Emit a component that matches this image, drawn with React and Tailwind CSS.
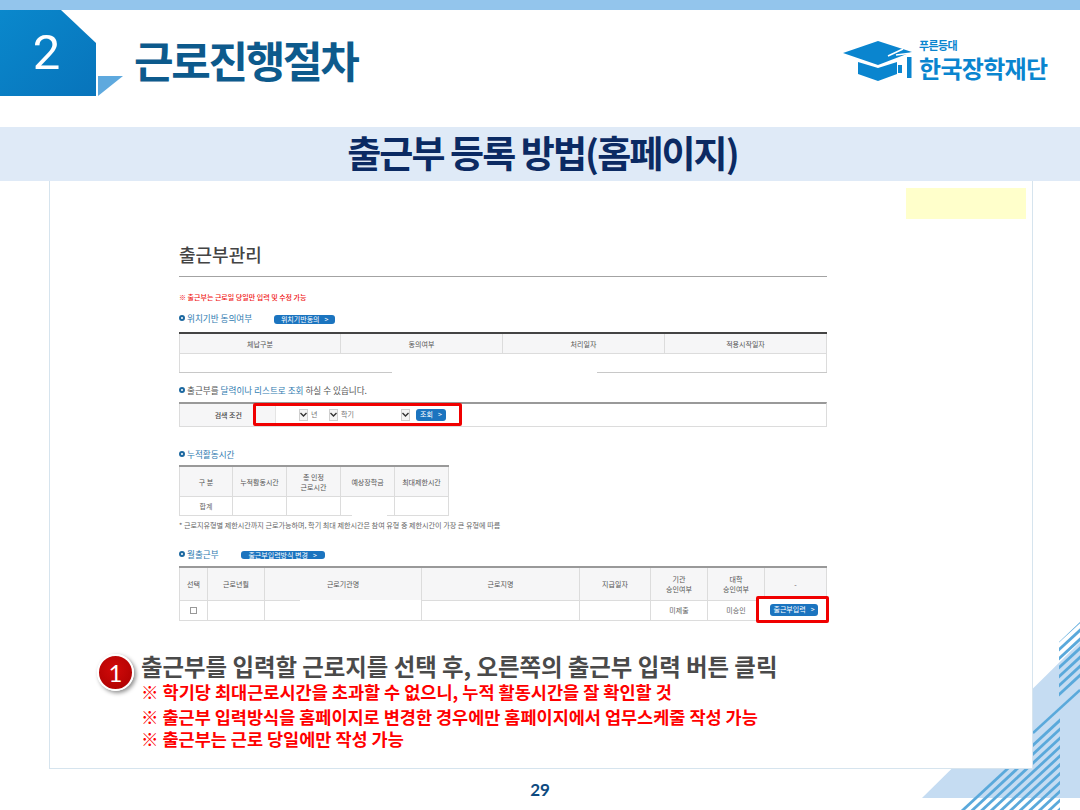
import React from "react";

const lineSet = (count, start, step) => Array.from({ length: count }, (_, i) => start + i * step);

const SectionTitle = ({ children, className = "" }) => (
  <div className={`flex items-center h-3 text-[8.6px] leading-3 text-[#2f7bb0] ${className}`}>
    <span className="w-[6px] h-[6px] rounded-full border-2 border-[#1c68a0] mr-[2px]" />
    {children}
  </div>
);

const Pill = ({ children, className = "" }) => (
  <span className={`flex items-center justify-center gap-[5px] rounded-[3px] bg-[#1b74bf] text-white text-[7px] leading-none ${className}`}>
    {children}
    <span>&gt;</span>
  </span>
);

const Head = ({ children, className = "" }) => (
  <div className={`flex items-center justify-center text-center bg-[#f6f6f7] border-r border-[#dcdcdc] text-[7px] leading-[10px] text-[#555] ${className}`}>
    {children}
  </div>
);

const Cell = ({ children, className = "" }) => (
  <div className={`flex items-center justify-center border-r border-[#dcdcdc] text-[7px] text-[#666] ${className}`}>{children}</div>
);

const Select = ({ className = "" }) => (
  <span className={`flex justify-end h-3 bg-white ${className}`}>
    <span className="flex items-center justify-center w-[9px] h-3 border border-[#cfcfcf] bg-[#f4f4f4]">
      <svg width="7" height="5" viewBox="0 0 7 5"><path d="M0.5 1 L3.5 4 L6.5 1" fill="none" stroke="#333" strokeWidth="1.4" /></svg>
    </span>
  </span>
);

const Decor = () => (
  <svg className="absolute left-0 top-0" width="1080" height="810" viewBox="0 0 1080 810">
    <defs>
      <clipPath id="upper"><polygon points="1059,642 1080,622 1080,680 1059,698" /></clipPath>
      <clipPath id="lower"><polygon points="958,810 1060,716 1060,810" /></clipPath>
    </defs>
    <polygon points="922,798 1080,642 1080,798" fill="#c5dcf2" />
    <g clipPath="url(#upper)" stroke="#5aa9db" strokeWidth="2.8">
      {lineSet(8, 640, 9).map((y) => <line key={y} x1="1050" y1={y + 9} x2="1090" y2={y - 28} />)}
    </g>
    <g clipPath="url(#lower)" stroke="#5aa9db" strokeWidth="2.8">
      {lineSet(20, 722, 8.9).map((y) => <line key={y} x1="950" y1={y + 100} x2="1070" y2={y - 11} />)}
    </g>
    <line x1="1033" y1="733" x2="1080" y2="690" stroke="#5aa9db" strokeWidth="2.4" />
  </svg>
);

const App = () => {
  return (
    <div className="relative w-[1080px] h-[810px] overflow-hidden bg-white font-['Noto_Sans_CJK_KR',sans-serif]">
      <Decor />
      <div className="relative">
        <div className="h-[10px] bg-[#93c5ec]" />

        <header className="flex h-[117px]">
          <div className="flex items-center justify-center w-[96px] h-[86px] pb-[2px] pr-[3px] bg-gradient-to-br from-[#0a88cc] to-[#0874bb] [clip-path:polygon(0_0,61px_0,96px_33px,96px_100%,0_100%)] text-white text-[49px] leading-none font-normal font-['Roboto',sans-serif]">
            2
          </div>
          <div className="w-[25px] h-5 mt-[66px] ml-[2px] bg-[#5ea9de] [clip-path:polygon(0_0,100%_0,0_100%)]" />
          <h1 className="ml-[11px] mt-[19px] h-[60px] text-[43px] leading-[60px] font-bold tracking-[-2.3px] text-[#0d5a8c] whitespace-nowrap">근로진행절차</h1>
          <div className="flex ml-auto mr-[33px] mt-[29px] h-[44px]">
            <svg width="76" height="44" viewBox="843 39 76 44">
              <polygon points="843,53 878,41 912,52 878,65" fill="#0a85cf" />
              <polygon points="858,62 878,68 897,62 897,74 878,81 858,74" fill="#0a85cf" />
              <path d="M888 56 L903 49 M896 55 L912 53" stroke="#fff" strokeWidth="1.6" fill="none" />
              <rect x="907" y="57" width="4.500" height="21" fill="#0a85cf" />
              <rect x="898" y="65" width="4" height="8" fill="#0a85cf" />
            </svg>
            <div className="w-[128px] text-[#0a85cf] font-bold">
              <div className="h-[15px] text-[11px] leading-[12px] tracking-[-0.6px]">푸른등대</div>
              <div className="text-[24px] leading-[28px] tracking-[-0.7px] whitespace-nowrap">한국장학재단</div>
            </div>
          </div>
        </header>

        <div className="flex items-center justify-center h-[54px] pl-[5px] bg-[#dfeaf7]">
          <h2 className="-mt-[4px] text-[37px] leading-[54px] font-bold tracking-[-1.9px] text-[#0b2a63] whitespace-nowrap">출근부 등록 방법(홈페이지)</h2>
        </div>

        <main className="w-[984px] h-[588px] ml-[49px] bg-white border-x border-b border-[#d6e4ee]">
          <div className="flex justify-end pr-[6px] pt-[7px]">
            <div className="w-[120px] h-[31px] bg-[#ffffcb]" />
          </div>

          <section className="w-[648px] ml-[129px] mt-[24px]">
            <div className="h-[24px] text-[18px] leading-[22px] font-medium text-[#444]">출근부관리</div>
            <div className="mt-[9px] h-px bg-[#a3a3a3]" />
            <div className="mt-[15px] h-[10px] text-[7px] leading-[10px] font-medium text-[#f01010]">※ 출근부는 근로일 당일만 입력 및 수정 가능</div>

            <div className="flex mt-[10px]">
              <SectionTitle>위치기반 동의여부</SectionTitle>
              <Pill className="ml-[22px] mt-[3px] w-[61px] h-[9px]">위치기반동의</Pill>
            </div>

            <div className="mt-[8px] border-t-2 border-[#444]">
              <div className="grid grid-cols-4 h-5 border-b border-[#dcdcdc]">
                <Head className="border-l">체납구분</Head>
                <Head>동의여부</Head>
                <Head>처리일자</Head>
                <Head>적용시작일자</Head>
              </div>
              <div className="h-[18px] border-x border-[#dcdcdc]" />
              <div className="flex justify-between">
                <div className="w-[213px] h-px bg-[#c8c8c8]" />
                <div className="w-[230px] h-px bg-[#c8c8c8]" />
              </div>
            </div>

            <SectionTitle className="mt-[11px]">
              <span className="text-[#555]">출근부를&nbsp;</span>달력이나 리스트로 조회<span className="text-[#555]">&nbsp;하실 수 있습니다.</span>
            </SectionTitle>

            <div className="flex mt-[6px] h-[25px] border-t-2 border-[#999] border-b border-r border-b-[#dcdcdc] border-r-[#dcdcdc]">
              <div className="flex items-center justify-end pr-[11px] w-[74px] bg-[#f6f6f7] border-l border-[#dcdcdc] text-[7px] font-medium text-[#444]">검색 조건</div>
              <div className="flex items-center w-[209px] h-[23px] -mt-[1px] border-[3px] border-[#f00000] rounded-[2px] text-[7px] text-[#777]">
                <span className="w-[20px] h-full bg-[#f6f6f7] border-r border-[#e4e4e4]" />
                <Select className="w-[28px] ml-[4px]" />
                <span className="ml-[3px] w-[9px]">년</span>
                <Select className="w-[18px]" />
                <span className="ml-[3px] w-[14px]">학기</span>
                <Select className="w-[55px]" />
                <Pill className="ml-[6px] w-[30px] h-[12px]">조회</Pill>
              </div>
            </div>

            <SectionTitle className="mt-[21px]">누적활동시간</SectionTitle>

            <div className="w-[270px] mt-[5px] border-t-2 border-[#999]">
              <div className="grid grid-cols-5 h-[30px] border-b border-[#dcdcdc]">
                <Head className="border-l">구 분</Head>
                <Head>누적활동시간</Head>
                <Head>총 인정<br />근로시간</Head>
                <Head>예상장학금</Head>
                <Head>최대제한시간</Head>
              </div>
              <div className="grid grid-cols-5 h-[18px]">
                <Cell className="border-l">합계</Cell>
                <Cell />
                <Cell />
                <Cell />
                <Cell />
              </div>
              <div className="flex justify-between">
                <div className="w-[173px] h-px bg-[#dcdcdc]" />
                <div className="w-[62px] h-px bg-[#dcdcdc]" />
              </div>
            </div>

            <div className="mt-[4px] h-[10px] text-[7.100px] leading-[10px] text-[#666] whitespace-nowrap">* 근로지유형별 제한시간까지 근로가능하며, 학기 최대 제한시간은 참여 유형 중 제한시간이 가장 큰 유형에 따름</div>

            <div className="flex mt-[18px]">
              <SectionTitle>월출근부</SectionTitle>
              <Pill className="ml-[22px] mt-[3px] w-[84px] h-[8px]">출근부입력방식 변경</Pill>
            </div>

            <div className="mt-[6px] border-t-2 border-[#999]">
              <div className="grid grid-cols-[29px_57px_157px_158px_71px_57px_57px_62px] h-[32px]">
                <Head className="border-l">선택</Head>
                <Head>근로년월</Head>
                <Head>근로기관명</Head>
                <Head>근로지명</Head>
                <Head>지급일자</Head>
                <Head>기관<br />승인여부</Head>
                <Head>대학<br />승인여부</Head>
                <Head>-</Head>
              </div>
              <div className="flex h-px">
                <div className="w-[121px] bg-[#dcdcdc]" />
                <div className="w-[121px]" />
                <div className="flex-1 bg-[#dcdcdc]" />
              </div>
              <div className="grid grid-cols-[29px_57px_157px_158px_71px_57px_57px_62px] grid-rows-[19px] h-[20px] border-b border-[#dcdcdc]">
                <Cell className="border-l">
                  <span className="w-[7px] h-[7px] border border-[#999]" />
                </Cell>
                <Cell />
                <Cell />
                <Cell />
                <Cell />
                <Cell>미제출</Cell>
                <Cell>미승인</Cell>
                <div className="flex items-center justify-center w-[73px] h-[27px] pl-[3px] -ml-[9px] -mt-[5px] border-[3px] border-[#f00000] rounded-[2px] bg-white">
                  <Pill className="w-[48px] h-[12px]">출근부입력</Pill>
                </div>
              </div>
            </div>
          </section>

          <section className="flex ml-[47px] mt-[30px]">
            <div className="flex items-center justify-center w-[37px] h-[37px] mt-[3px] rounded-full border-2 border-white bg-[radial-gradient(circle_at_45%_40%,#d20a0a,#a80000)] shadow-[2px_2px_4px_rgba(0,0,0,0.45)] text-white text-[24px] font-['Lato',sans-serif]">
              1
            </div>
            <div className="ml-[7px] whitespace-nowrap">
              <div className="h-[30px] text-[23.400px] leading-[30px] font-bold text-[#4a4a4a]">출근부를 입력할 근로지를 선택 후, 오른쪽의 출근부 입력 버튼 클릭</div>
              <div className="h-[22px] text-[17.550px] leading-[22px] font-bold text-[#ff0000]">※ 학기당 최대근로시간을 초과할 수 없으니, 누적 활동시간을 잘 확인할 것</div>
              <div className="h-[22px] mt-[3px] text-[17.500px] leading-[22px] font-bold text-[#ff0000]">※ 출근부 입력방식을 홈페이지로 변경한 경우에만 홈페이지에서 업무스케줄 작성 가능</div>
              <div className="h-[22px] text-[17.500px] leading-[22px] font-bold text-[#ff0000]">※ 출근부는 근로 당일에만 작성 가능</div>
            </div>
          </section>
        </main>

        <div className="flex items-center justify-center h-[41px] text-[17px] font-bold text-[#0d4a80] font-['Lato',sans-serif]">29</div>
      </div>
    </div>
  );
};

export default App;
